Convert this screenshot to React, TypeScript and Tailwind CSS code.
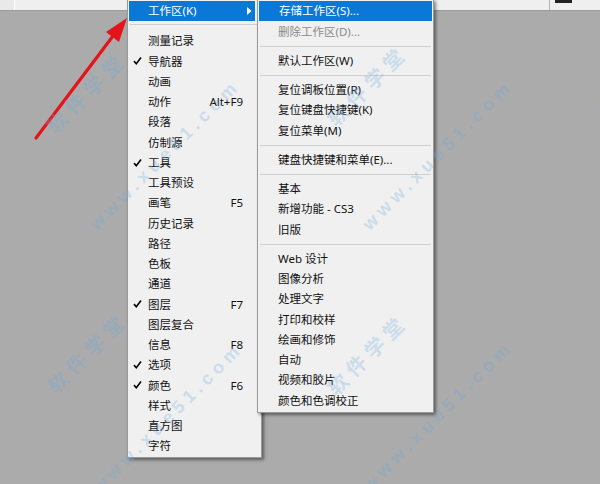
import React from "react";

type Item = {
  label?: string;
  check?: boolean;
  shortcut?: string;
  sep?: boolean;
  disabled?: boolean;
  active?: boolean;
};

const panelItems: Item[] = [
  { label: "测量记录" },
  { label: "导航器", check: true },
  { label: "动画" },
  { label: "动作", shortcut: "Alt+F9" },
  { label: "段落" },
  { label: "仿制源" },
  { label: "工具", check: true },
  { label: "工具预设" },
  { label: "画笔", shortcut: "F5" },
  { label: "历史记录" },
  { label: "路径" },
  { label: "色板" },
  { label: "通道" },
  { label: "图层", check: true, shortcut: "F7" },
  { label: "图层复合" },
  { label: "信息", shortcut: "F8" },
  { label: "选项", check: true },
  { label: "颜色", check: true, shortcut: "F6" },
  { label: "样式" },
  { label: "直方图" },
  { label: "字符" },
];

const workspaceItems: Item[] = [
  { label: "存储工作区(S)...", active: true },
  { label: "删除工作区(D)...", disabled: true },
  { sep: true },
  { label: "默认工作区(W)" },
  { sep: true },
  { label: "复位调板位置(R)" },
  { label: "复位键盘快捷键(K)" },
  { label: "复位菜单(M)" },
  { sep: true },
  { label: "键盘快捷键和菜单(E)..." },
  { sep: true },
  { label: "基本" },
  { label: "新增功能 - CS3" },
  { label: "旧版" },
  { sep: true },
  { label: "Web 设计" },
  { label: "图像分析" },
  { label: "处理文字" },
  { label: "打印和校样" },
  { label: "绘画和修饰" },
  { label: "自动" },
  { label: "视频和胶片" },
  { label: "颜色和色调校正" },
];

// watermark stamps, centre points read off the screenshot
const marks = [
  { text: "软件学堂", cls: "left-[87px] top-[93px] text-[20px] tracking-[6px]" },
  { text: "软件学堂", cls: "left-[88px] top-[353px] text-[20px] tracking-[6px]" },
  { text: "软件学堂", cls: "left-[368px] top-[86px] text-[20px] tracking-[6px]" },
  { text: "软件学堂", cls: "left-[368px] top-[355px] text-[20px] tracking-[6px]" },
  { text: "软件学堂", cls: "left-[640px] top-[80px] text-[20px] tracking-[6px]" },
  { text: "软件学堂", cls: "left-[642px] top-[345px] text-[20px] tracking-[6px]" },
  { text: "www.xue51.com", cls: "left-[165px] top-[155px] text-[18px] tracking-[5px]" },
  { text: "www.xue51.com", cls: "left-[438px] top-[155px] text-[18px] tracking-[5px]" },
  { text: "www.xue51.com", cls: "left-[168px] top-[418px] text-[18px] tracking-[5px]" },
  { text: "www.xue51.com", cls: "left-[438px] top-[416px] text-[18px] tracking-[5px]" },
];

function Check() {
  return (
    <svg width="9" height="9" viewBox="0 0 9 9" className="absolute left-[5px] top-1/2 -translate-y-1/2">
      <path d="M1 4.6 L3.3 7.2 L8 1" fill="none" stroke="#000" strokeWidth="1.6" />
    </svg>
  );
}

function Row({ item, sepClass }: { item: Item; sepClass: string }) {
  if (item.sep) {
    return (
      <div className={sepClass}>
        <div className="mx-[2px] border-t border-[#cfcfcf]" />
      </div>
    );
  }
  return (
    <div
      className={`relative flex h-[20.25px] items-center pl-[20px] pr-[18px] leading-none ${
        item.active ? "mx-[1px] bg-[#0a78d7] text-white" : item.disabled ? "text-[#8a8a8a]" : "text-[#111]"
      }`}
    >
      {item.check && <Check />}
      <span className="flex-1 whitespace-nowrap">{item.label}</span>
      {item.shortcut && <span className="whitespace-nowrap">{item.shortcut}</span>}
    </div>
  );
}

export default function App() {
  return (
    <div
      className="relative h-[484px] w-[600px] overflow-hidden bg-[#ababab] text-[11.5px]"
      style={{ fontFamily: '"Noto Sans", "Noto Sans CJK SC", sans-serif' }}
    >
      {/* toolbar strip peeking at the top */}
      <div className="flex h-[11px] border-b border-[#9c9c9c] bg-[#efefef]">
        <div className="w-[15px] border-r border-white bg-[#e9e9e9]" />
        <div className="flex-1" />
        <div className="w-[51px] border-l border-[#b5b5b5]">
          <div className="ml-[5px] h-[3px] w-[17px] bg-[#222]" />
        </div>
      </div>

      {/* red pointer arrow */}
      <svg width="140" height="150" className="absolute left-0 top-0">
        <line x1="36" y1="138" x2="113" y2="36" stroke="#e3141b" strokeWidth="3.2" strokeLinecap="round" />
        <polygon points="127,18 119,42 106,32" fill="#e3141b" />
      </svg>

      {/* window menu */}
      <div className="absolute left-[127px] top-[-1px] w-[135px] border border-[#9a9a9a] bg-[#f0f0f0] shadow-[2px_2px_3px_rgba(0,0,0,0.45)]">
        <div className="relative ml-[1px] mr-[6px] mt-[1px] flex h-[20px] items-center bg-[#0a78d7] pl-[19px] text-white">
          <span>工作区(K)</span>
          <svg width="5" height="8" viewBox="0 0 5 8" className="absolute right-[3px] top-[6px]">
            <polygon points="0,0 4.5,4 0,8" fill="#fff" />
          </svg>
        </div>
        <div className="h-[10px] pt-[3px]">
          <div className="mx-[2px] border-t border-[#cfcfcf]" />
        </div>
        {panelItems.map((it, i) => (
          <Row key={i} item={it} sepClass="" />
        ))}
        <div className="h-[1px]" />
      </div>

      {/* workspace submenu */}
      <div className="absolute left-[257px] top-[-1px] w-[177px] border border-[#9a9a9a] bg-[#f0f0f0] pt-[1px] shadow-[2px_2px_3px_rgba(0,0,0,0.45)]">
        {workspaceItems.map((it, i) => (
          <Row key={i} item={it} sepClass="h-[9px] pt-[4px]" />
        ))}
        <div className="h-[1px]" />
      </div>

      {/* site watermark */}
      {marks.map((m, i) => (
        <span
          key={i}
          className={`pointer-events-none absolute -translate-x-1/2 -translate-y-1/2 -rotate-45 whitespace-nowrap font-bold text-[rgba(110,170,220,0.3)] ${m.cls}`}
          style={{ fontFamily: '"Liberation Sans", "Noto Sans CJK SC", sans-serif' }}
        >
          {m.text}
        </span>
      ))}
    </div>
  );
}
